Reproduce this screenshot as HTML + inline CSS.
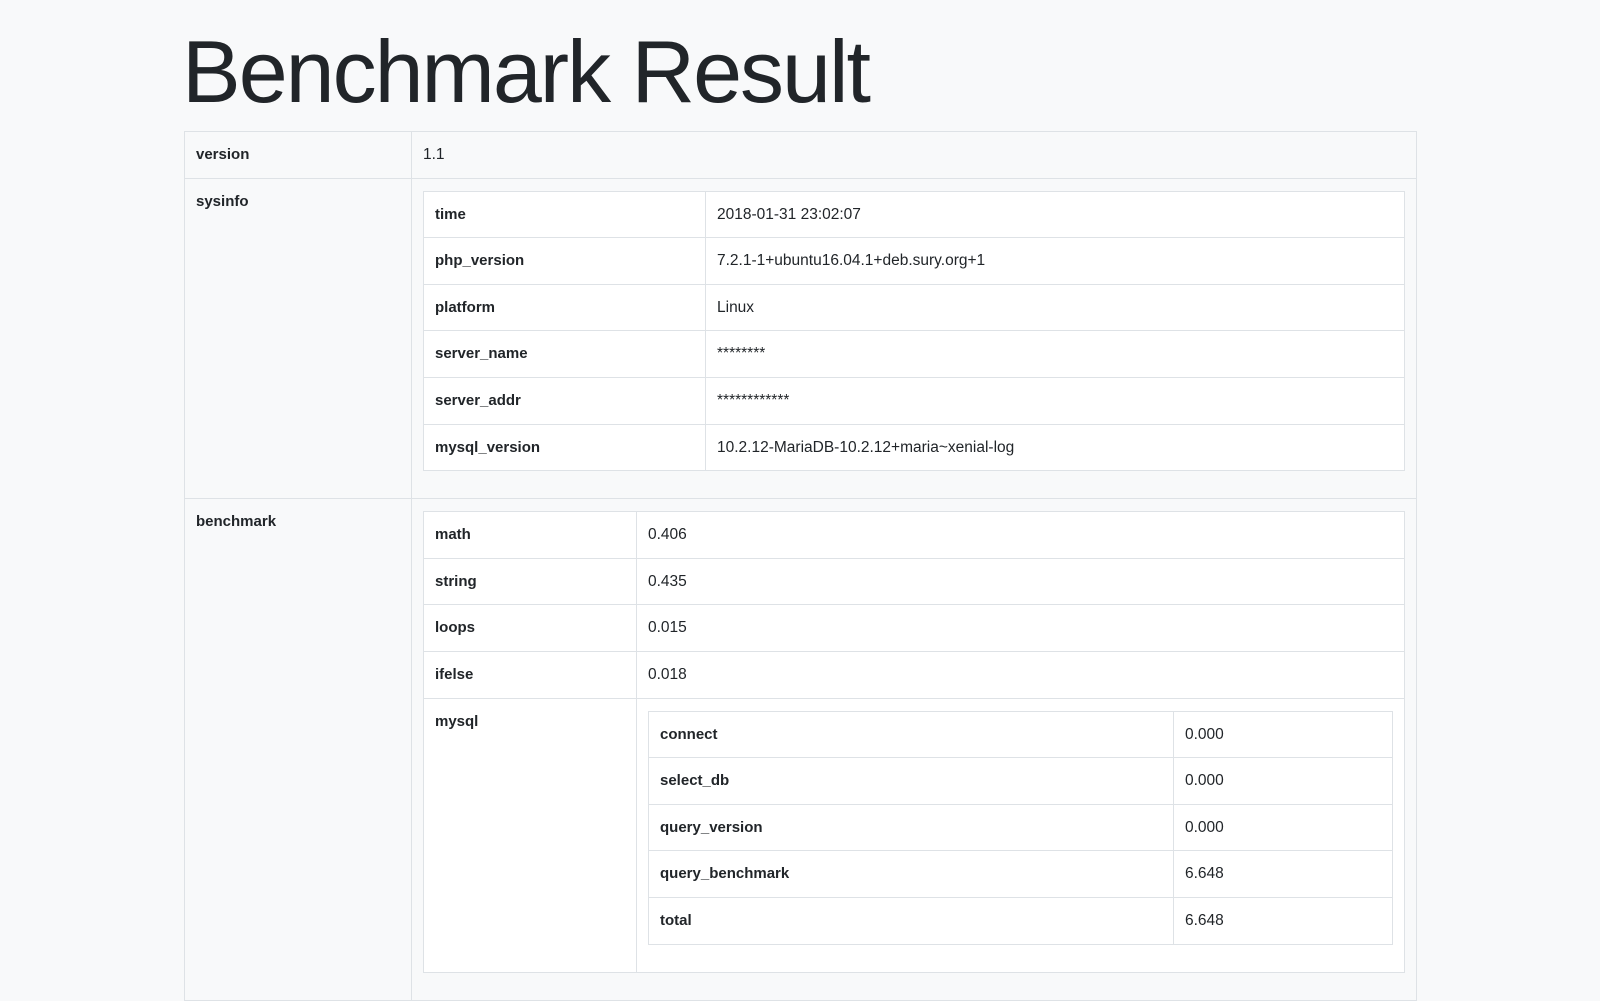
<!DOCTYPE html>
<html><head><meta charset="utf-8"><style>
html,body{margin:0;padding:0;background:#f8f9fa;}
body{font-family:"Liberation Sans",sans-serif;color:#212529;font-size:15px;width:1600px;height:1000px;overflow:hidden;position:relative;}
h1{position:absolute;left:182px;top:28px;margin:0;font-weight:300;font-size:88px;line-height:1;letter-spacing:-2px;color:#212529;}
table{border-collapse:collapse;table-layout:fixed;}
td{border:1px solid #dee2e6;padding:12px 11px;line-height:21.6px;vertical-align:top;font-size:15.5px;}
td.k{font-weight:bold;font-size:15px;}
.outer{position:absolute;left:184px;top:131px;width:1233px;}
.inner{width:100%;background:#fff;}
td.n{padding:12px 11px 27px 11px;}
</style></head><body>
<h1>Benchmark Result</h1>
<table class="outer">
<colgroup><col style="width:227px"><col></colgroup>
<tr><td class="k">version</td><td>1.1</td></tr>
<tr><td class="k">sysinfo</td><td class="n">
<table class="inner"><colgroup><col style="width:282px"><col></colgroup>
<tr><td class="k">time</td><td>2018-01-31 23:02:07</td></tr>
<tr><td class="k">php_version</td><td>7.2.1-1+ubuntu16.04.1+deb.sury.org+1</td></tr>
<tr><td class="k">platform</td><td>Linux</td></tr>
<tr><td class="k">server_name</td><td>********</td></tr>
<tr><td class="k">server_addr</td><td>************</td></tr>
<tr><td class="k">mysql_version</td><td>10.2.12-MariaDB-10.2.12+maria~xenial-log</td></tr>
</table></td></tr>
<tr><td class="k">benchmark</td><td class="n">
<table class="inner"><colgroup><col style="width:213px"><col></colgroup>
<tr><td class="k">math</td><td>0.406</td></tr>
<tr><td class="k">string</td><td>0.435</td></tr>
<tr><td class="k">loops</td><td>0.015</td></tr>
<tr><td class="k">ifelse</td><td>0.018</td></tr>
<tr><td class="k">mysql</td><td class="n">
<table class="inner"><colgroup><col style="width:525px"><col></colgroup>
<tr><td class="k">connect</td><td>0.000</td></tr>
<tr><td class="k">select_db</td><td>0.000</td></tr>
<tr><td class="k">query_version</td><td>0.000</td></tr>
<tr><td class="k">query_benchmark</td><td>6.648</td></tr>
<tr><td class="k">total</td><td>6.648</td></tr>
</table></td></tr>
</table></td></tr>
</table>
</body></html>
